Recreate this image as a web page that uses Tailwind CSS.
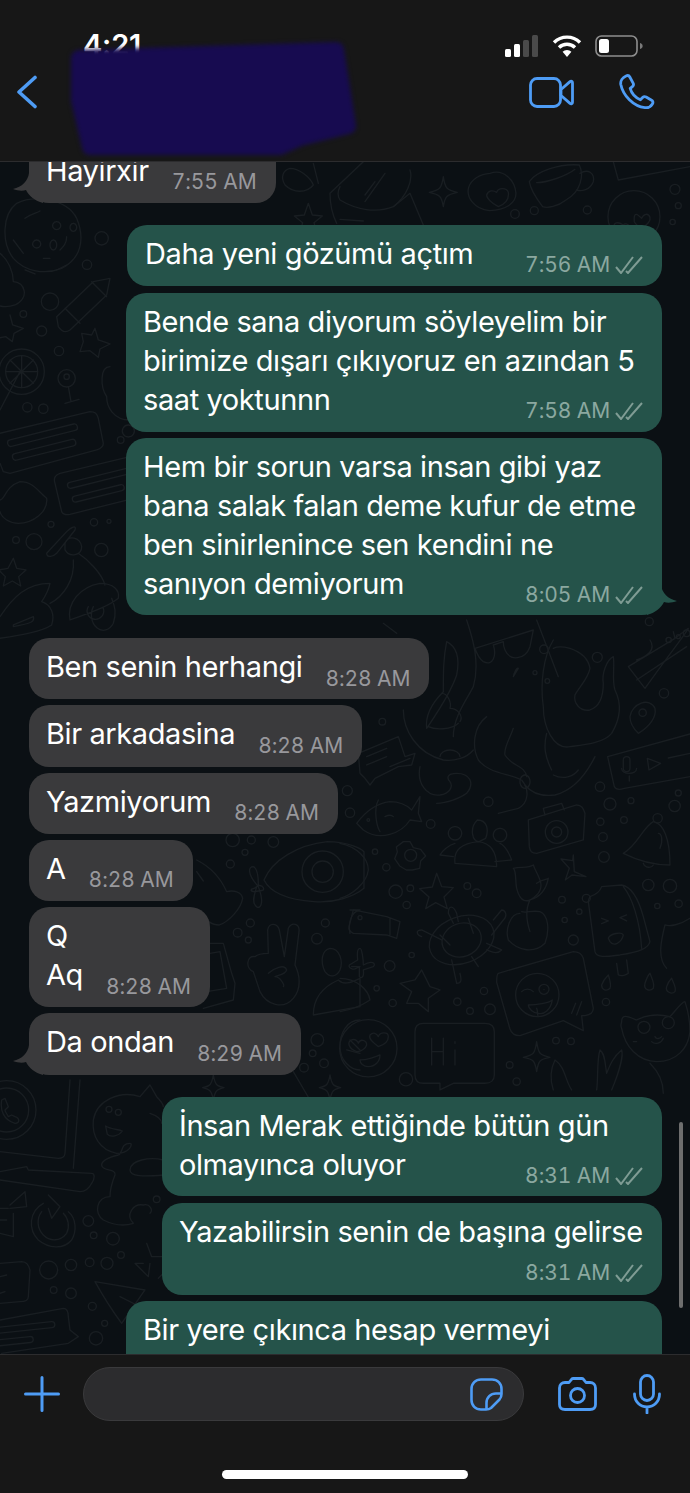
<!DOCTYPE html>
<html lang="en">
<head>
  <meta charset="UTF-8">
  <meta name="viewport" content="width=device-width, initial-scale=1.0">
  <title>Chat</title>
  <script src="https://cdn.jsdelivr.net/npm/@tailwindcss/browser@4"></script>
</head>
<body class="bg-[#0b1014]">
<div class="relative flex flex-col w-[690px] h-[1493px] overflow-hidden font-['Inter',sans-serif] text-white">

  <!-- Header -->
  <header class="relative z-10 h-[162px] shrink-0 bg-[#171717] border-b border-[#2c2c2e]">
    <div class="flex items-start h-[62px] pt-[30px] pl-[83px] pr-[47px] justify-between">
      <span class="text-[29px] leading-[30px] font-semibold tracking-[-0.2px]">4:21</span>
      <div class="flex items-center gap-[13px] pt-[5px]">
        <!-- signal -->
        <svg width="34" height="22" viewBox="0 0 34 22">
          <rect x="0" y="14" width="6" height="8" rx="1.5" fill="#fff"/>
          <rect x="9" y="9" width="6" height="13" rx="1.5" fill="#fff"/>
          <rect x="18" y="5" width="6" height="17" rx="1.5" fill="#4a4a4a"/>
          <rect x="27" y="0" width="6" height="22" rx="1.5" fill="#4a4a4a"/>
        </svg>
        <!-- wifi -->
        <svg width="30" height="22" viewBox="0 0 30 22" fill="none" stroke="#fff" stroke-width="3.4">
          <path d="M2 7.5a18.5 18.5 0 0 1 26 0"/>
          <path d="M7 12.5a11.5 11.5 0 0 1 16 0"/>
          <path d="M15 22l-4.4-5.2a6 6 0 0 1 8.8 0z" fill="#fff" stroke="none"/>
        </svg>
        <!-- battery -->
        <svg width="48" height="22" viewBox="0 0 48 22" fill="none">
          <rect x="1" y="1" width="41" height="20" rx="5.5" stroke="#8e8e8e" stroke-width="1.6"/>
          <rect x="4" y="4" width="10" height="14" rx="2.5" fill="#fff"/>
          <path d="M45 8c2 .6 2.6 1.6 2.6 3s-.6 2.4-2.6 3z" fill="#7a7a7a"/>
        </svg>
      </div>
    </div>
    <div class="flex items-center justify-between h-[60px] pl-[16px] pr-[35px]">
      <svg width="22" height="34" viewBox="0 0 22 34" fill="none" stroke="#4e9cf5" stroke-width="3.6" stroke-linecap="round" stroke-linejoin="round">
        <path d="M19 2.5L3 17l16 14.5"/>
      </svg>
      <div class="flex items-center gap-[45px]">
        <svg width="45" height="31" viewBox="0 0 45 31" fill="none" stroke="#4e9cf5" stroke-width="2.8" stroke-linejoin="round">
          <rect x="1.5" y="1.5" width="30" height="28" rx="6.5"/>
          <path d="M32 12.5L41 4.600c1.100-.9 2.500-.3 2.500 1.200v19.400c0 1.500-1.400 2.100-2.500 1.200L32 18.500z"/>
        </svg>
        <svg width="36" height="36" viewBox="0 0 36 36" fill="none" stroke="#4e9cf5" stroke-width="2.8" stroke-linejoin="round">
          <path d="M7 2c1.500-.8 3-.5 3.800 1l3.300 6.200c.7 1.300.4 2.500-.7 3.400l-2.200 1.800c1.400 5.300 4.800 9 10.200 11.400l2.200-2.300c1-1 2.200-1.200 3.500-.5l5.500 3.200c1.400.8 1.700 2.400.8 3.700-1.700 2.700-4.500 4.200-7.500 3.700C14.500 32.600 4 21.500 1.800 10.500 1.200 7 3.500 3.600 7 2z"/>
        </svg>
      </div>
    </div>
  </header>

  <!-- Redacted contact name -->
  <svg class="absolute z-20 left-0 top-0 blur-[2px]" width="400" height="170" viewBox="0 0 400 170">
    <path d="M79 58L336 50L348 126L300 138L280 147L90 147L79 100z" fill="#170b50" stroke="#170b50" stroke-width="16" stroke-linejoin="round"/>
  </svg>

  <!-- Messages -->
  <main class="relative flex-1 overflow-hidden bg-[#0b1014]">
    <!-- Wallpaper doodles, drawn in 3x crop coordinates -->
    <svg class="absolute inset-0" width="690" height="1192" viewBox="0 162 690 1192" fill="none" stroke="#191e22" stroke-width="4" stroke-linecap="round" stroke-linejoin="round">
      <g transform="translate(250 160) scale(.3333)">
        <path d="M120 25c25 0 60 25 70 50-20 25-60 25-85 0-15-25-5-45 15-50zM190 10l15 60"/>
        <path d="M340 5L240 100c0 40 10 70 20 90M480 30c10 30-10 80-50 110-50 20-110 10-160-20-10-15-5-30 0-40M345 105l30-40M345 125l60-85"/>
        <path d="M430 140l50-40 40 95M270 178l70 5"/>
        <path d="M175 130l12 35 30 3-25 20 8 30-25-18-25 18 8-30-25-20 30-3z"/>
        <path d="M580 50c5 35 10 40 42 47-32 7-37 12-42 43-5-31-10-36-42-43 32-7 37-12 42-47z"/>
        <path d="M720 40c40-15 75 20 78 60 0 30-30 50-80 52-45-5-70-40-62-70 8-25 35-40 64-42z"/>
        <path d="M745 140c-20-10-35-25-35-35 5-15 20-15 30-8 5-15 30-15 35 0 3 20-10 35-30 43z"/>
        <path d="M838 65c20-30 90-55 150-50 15 30 5 80-40 105-25 20-55 25-70 20-15-20-35-45-40-75z"/>
        <path d="M860 68c30 0 90-20 115-40M990 40c25-15 45 0 40 25-10 25-35 30-50 25"/>
        <circle cx="795" cy="162" r="13"/><circle cx="853" cy="152" r="12"/><circle cx="1012" cy="150" r="12"/>
        <circle cx="1152" cy="170" r="78"/><circle cx="1275" cy="88" r="15"/><circle cx="1285" cy="137" r="9"/><circle cx="1268" cy="186" r="8"/>
        <path d="M1120 195c-15-10-30-10-28 8 2 12 15 22 28 25 10-10 20-20 18-28-3-10-15-10-18-5zM1175 175c-10-10-25-25-22 10 2 6 10 12 20 22 15-10 30-25 27-35-5-15-20-10-25 3z"/>
        <path d="M1090 5l15 55 215-40"/>
      </g>

      <g transform="translate(0 190) scale(.3333)">
        <path d="M50 40c50-25 150-15 180 45 25 60 15 120-45 150-50 20-110 10-145-30-35-45-35-130 10-165z"/>
        <path d="M75 85c20-15 35-15 45-22M110 150a12 12 0 1 0 .1 0M170 95a12 12 0 1 0 .1 0M220 100a10 12 0 1 0 .1 0M160 150a10 15 0 1 0 .1 0M130 205h20M40 150l30 40M200 140c0 20-10 30-20 40M75 240l30 12M170 240l30-15"/>
        <path d="M0 190c25 20 40 55 40 85 35 0 50 50 5 70-15 5-35 5-45 3"/>
        <path d="M170 380l110-105 50-10-10 50-110 105c-15 10-25 5-35-10zM275 275l45 45M195 355l45 45"/>
        <circle cx="150" cy="335" r="26"/><circle cx="125" cy="423" r="15"/><circle cx="70" cy="372" r="10"/><circle cx="177" cy="483" r="14"/><circle cx="305" cy="145" r="20"/><circle cx="261" cy="224" r="14"/>
        <path d="M285 415l10 35 35 12-30 15-5 25-25-20-30 3 10-30-5-25 30 5z"/>
        <path d="M30 375l8 30 32 10-28 15-5 25-20-15-25 5"/>
        <circle cx="65" cy="545" r="68"/><circle cx="65" cy="545" r="48"/><path d="M65 497v96M17 545h96M30 510l70 70M100 510l-70 70M0 660l60-115"/>
        <circle cx="200" cy="565" r="26"/><circle cx="200" cy="560" r="8"/><path d="M205 590l8 45M195 640l42-12"/>
        <circle cx="82" cy="652" r="14"/><circle cx="130" cy="656" r="14"/>
        <path d="M0 730l270-65c15 0 20 5 25 20l15 75c0 10-5 15-20 20l-260 70-20-5-10-25h-20"/>
        <rect x="20" y="725" width="215" height="20" rx="9" transform="rotate(-14 130 735)"/>
        <rect x="35" y="770" width="195" height="20" rx="9" transform="rotate(-14 130 780)"/>
        <path d="M390 800l-210 50c-15 5-20 15-15 30l20 85c5 10 15 10 25 8l180-45"/>
        <rect x="200" y="855" width="190" height="18" rx="9" transform="rotate(-14 300 865)"/>
        <rect x="215" y="900" width="160" height="18" rx="9" transform="rotate(-14 300 910)"/>
        <path d="M385 705a18 18 0 1 0 .1 0M330 530c-30 0-30 60-10 90 0 30 20 70 70 70"/>
        <circle cx="362" cy="750" r="10"/><circle cx="282" cy="997" r="11"/><circle cx="327" cy="994" r="6"/><circle cx="153" cy="1003" r="9"/><circle cx="48" cy="1050" r="10"/><circle cx="102" cy="1055" r="24"/><circle cx="304" cy="1080" r="20"/>
        <path d="M0 930c15 0 15-40 60-55 40 0 55 30 80 50 5 40-40 75-85 75-25 0-50-15-55-35"/>
        <path d="M140 1090l60-65c15-15 30-20 25-5l-55 70c-10 10-30 15-30 0zM195 1060c10-25 45-20 50 10 0 25-35 35-50 10zM235 1090c30 20 70 60 80 95M220 1110c5 60-30 110-70 130"/>
        <path d="M40 1105l10 30 28 5-22 20 6 28-25-15-27 15 6-28-20-20 28-5z"/>
        <path d="M0 1280c40-60 80-100 150-100-5 25-15 40-25 55 30 10 40 40 30 70-30 20-90 30-155 40M40 1305l60-25c5 15-5 20-60 30z"/>
        <path d="M210 1290c-10-50 30-100 90-110 40 0 60 20 55 45-25 20-60 35-145 65zM280 1250a35 45 0 1 0 60 50c10-30 5-50-5-75M265 1250a25 25 0 1 0 45 5"/>
      </g>

      <g transform="translate(190 830) scale(.3333)">
        <circle cx="128" cy="30" r="20"/><circle cx="184" cy="30" r="12"/><circle cx="250" cy="36" r="16"/><circle cx="165" cy="67" r="9"/><circle cx="121" cy="102" r="12"/>
        <path d="M20 90c40 20 70 50 90 95 20-5 45 0 48 20-5 30-40 70-70 80-25 0-40-15-45-30M20 125l20 28"/>
        <path d="M222 150c25-60 100-105 190-115 60 0 100 20 110 30v110c-30 25-90 45-150 40-70-5-130-25-150-65z"/>
        <circle cx="398" cy="125" r="62"/><circle cx="398" cy="125" r="32"/>
        <path d="M205 170c-35-40-30-60-15-60 12 5 15 30 15 55-10 15-25 10-20 15-5 0 0 5 10 5 15-5 30 0 25-12-5-8-15-8-20-3-5 20-15 40-5 55 10 15 20 5 20-15 0-15-5-25-10-40z"/>
        <circle cx="181" cy="279" r="12"/><circle cx="143" cy="308" r="13"/><circle cx="175" cy="330" r="9"/><circle cx="406" cy="279" r="12"/><circle cx="381" cy="326" r="16"/>
        <path d="M235 370l-2-70c5-25 30-20 35 0l15 80 12-85c10-20 35-15 32 10l-12 100c15 30 20 70-5 100-30 35-80 20-100-20l-20-60c-25-10-20-50 5-45 10-10 30-10 40-10"/>
        <path d="M235 430c15-15 50-30 55-10-5 15-25 15-35 20 15 0 30 25 25 30"/>
        <path d="M420 355c30 0 40 40 30 65-10 20-30 25-45 5-15-30-10-65 15-70z"/>
        <path d="M370 555c0-50 30-85 75-105 15 15 35 10 65-5v85z"/>
        <path d="M480 240h30M480 310c-5-25 0-65 30-70M485 410h25"/>
        <circle cx="382" cy="630" r="19"/><circle cx="368" cy="670" r="10"/><circle cx="342" cy="713" r="13"/><circle cx="402" cy="700" r="13"/>
        <path d="M510 570c-40 0-60 40-60 80 0 40 30 70 60 70M470 660l40 10M480 630l30 30"/>
        <path d="M420 735c5 30 10 33 32 38-22 5-27 10-32 37-5-27-10-32-32-37 22-5 27-8 32-38zM70 735c5 30 10 33 32 38-22 5-27 10-32 37-5-27-10-32-32-37 22-5 27-8 32-38z"/>
        <path d="M60 340l40 0 25 90 10 30-5 50-90 25M60 370l30-5 20 110-60 10"/>
        <path d="M310 725l50 85"/>
      </g>

      <g transform="translate(340 620) scale(.3333)">
        <path d="M405 85l175-55-10 50c-15 40-60 45-75 10-5-10-5-20-5-25l-30 10c10 30 0 65-30 50-15-10-20-25-25-40zM590 0l65 170M520 170l15-25c-5-5-15 20-15 25zM130 10l40 30M380 0c20 60 40 130 20 200-20 40-60 90-60 150"/>
        <circle cx="612" cy="88" r="13"/><circle cx="622" cy="183" r="7"/><circle cx="585" cy="158" r="6"/><circle cx="127" cy="305" r="10"/><circle cx="772" cy="112" r="15"/><circle cx="928" cy="5" r="12"/><circle cx="972" cy="220" r="14"/>
        <path d="M320 65c30 15 40 50 30 100-20 60-70 130-90 160-5-40 20-80 50-110 0-60 0-100 10-150zM190 270c0 60 40 130 120 150 30 5 70-5 90-30"/>
        <path d="M305 220c20 0 30 30 25 45 25 0 40 25 30 40M265 320c20 10 70 10 90-10"/>
        <path d="M300 410a30 20 0 0 1 60 0M240 440c-10 50 20 90 60 85 30-5 40-25 30-40-10-10-10-25 20-25 40 0 55 30 30 60-20 15-60 30-90 30"/>
        <path d="M440 290c-40 30-45 90-25 130 30 40 90 40 130 60 25 30 20 70-10 85l-60 15M520 325c-10 30-30 60-25 80 20 35 60 30 65 65M555 465a15 20 0 1 0 .1 0"/>
        <path d="M640 60c-30 50-40 130-30 200 0 60 30 130 80 120 40-5 100-10 125-40 30-50 30-90 10-130-10-30 0-70-5-100-20 10-35 50-30 80 0 40-10 70-40 80-30 5-50-20-45-45 10-20 40-50 45-80-5-30-30-50-60-60-20-5-40-5-50 0"/>
        <path d="M620 340c-10 40-5 70 15 110M640 465c30 15 60 5 75-15M765 410c-25 50-60 100-120 115-40 5-70-5-90-30"/>
        <path d="M870 290c5-40 60-60 75-25 5 25-15 55-50 75-15-15-25-30-25-50z"/><circle cx="908" cy="278" r="11"/>
        <path d="M865 140l140-85 40-30c-10 20-30 40-130 180zM890 180l150-100M930 60c20 30-10 50-40 60M1000 35l5 20"/>
        <circle cx="986" cy="60" r="8"/><circle cx="1015" cy="50" r="6"/><circle cx="1040" cy="40" r="10"/>
        <path d="M803 410l247-68M803 410l20 90c5 10 15 10 30 5l197-35M1050 400l-65 14"/>
        <path d="M922 415l40 15-35 20z"/><rect x="850" y="410" width="20" height="45" rx="10"/><path d="M845 445c0 20 45 20 45 0M868 468v15"/>
        <path d="M60 460l-5-60 120-50 20 60 30-10-10 35-40 5-70 35-15 20-15-20z"/><path d="M80 410l60-25M80 435l60-25"/><path d="M150 440l60-25"/>
        <circle cx="22" cy="512" r="15"/><circle cx="30" cy="578" r="14"/><circle cx="445" cy="545" r="14"/><circle cx="272" cy="612" r="13"/>
        <path d="M50 610c30-40 60-60 100-65 30 0 50 10 65 25l25-40-5 50 10 25-35-5c-25 40-90 65-140 30z"/><path d="M115 540c-15 30-5 80 5 95"/><circle cx="85" cy="600" r="4"/><path d="M135 590c10-5 20-5 25 0"/>
        <path d="M565 600l145-45c15 0 20 10 25 25l-5 80-140 40c-15 0-20-5-22-20zM615 585l-5-20 55-15 8 20"/>
        <circle cx="650" cy="636" r="34"/><circle cx="650" cy="636" r="15"/>
        <circle cx="780" cy="500" r="14"/><circle cx="810" cy="552" r="18"/><circle cx="873" cy="542" r="9"/><circle cx="781" cy="605" r="11"/><circle cx="852" cy="600" r="10"/><circle cx="789" cy="651" r="13"/><circle cx="792" cy="711" r="16"/><circle cx="1015" cy="519" r="9"/><circle cx="1004" cy="558" r="17"/>
        <path d="M850 700c40-20 60-80 90-95 30 5 50 50 50 130-50 0-100-15-140-35z"/><circle cx="953" cy="595" r="14"/><path d="M955 640c10 0 15 20 5 45M910 730c5 15 25 15 30 5"/>
        <path d="M412 600c30 0 35 30 25 55l-20 10c-20 0-30-40-5-65zM345 730c-5-40 20-60 70-65 40 5 55 35 55 75zM345 620a20 20 0 1 0 .1 0M480 625a20 20 0 1 0 .1 0M345 670c-20 5-40 25-45 35l40 5M480 670c15 5 30 35 35 50l-50 5"/>
        <circle cx="105" cy="695" r="8"/><circle cx="139" cy="742" r="11"/>
        <path d="M190 665l20 0 10 18 22 5 15 20-15 15-3 22-22 5-18 0-20-12-15-22 8-20-3-15z"/><circle cx="212" cy="706" r="18"/>
        <path d="M0 670c50 10 85 45 85 80-5 40-50 75-85 85"/>
        <path d="M290 760l15 40 35 3-28 28 10 35-35-18-30 18 10-35-28-25 38-5z"/>
        <circle cx="167" cy="815" r="20"/><circle cx="211" cy="805" r="10"/><circle cx="200" cy="855" r="11"/><circle cx="382" cy="798" r="10"/><circle cx="410" cy="820" r="13"/>
        <path d="M700 705l3 50 35 15-42-5-20 15 12-35-25-28 35 5z"/>
        <path d="M40 870l100 20 40 15-10 50-30-10-100-5c-10-5-15-10-13-20zM150 895l0 50"/><circle cx="60" cy="893" r="6"/>
        <path d="M60 985c-5 0-10 5-7 35l-25 15c-5 10 15 15 20 10l10-5 0 30c5 5 15 5 12-20l30-10c10-10-5-20-30-5 0-20-5-50-10-50z"/>
        <circle cx="149" cy="1038" r="16"/><circle cx="215" cy="1005" r="8"/><circle cx="110" cy="1105" r="8"/><circle cx="158" cy="1149" r="11"/><circle cx="352" cy="1145" r="11"/><circle cx="390" cy="1173" r="10"/><circle cx="450" cy="1168" r="16"/><circle cx="432" cy="1113" r="11"/>
        <path d="M0 1075c50 0 85 35 90 65-30 20-60 30-90 35"/>
        <path d="M245 1050l25 50 30 10-35 25 0 40-30-25-35 0 15-35-35-25 45-10z"/>
        <ellipse cx="365" cy="960" rx="60" ry="50" transform="rotate(-20 365 960)"/><ellipse cx="365" cy="960" rx="100" ry="70" transform="rotate(-20 365 960)"/>
        <path d="M340 910l-15-30c0-25 15-25 25 0l5 25M460 900l25-30c10 0 20 15 5 30l-35 45M305 960l-60-30c-20 0-15 15 0 20M335 1020l15 70c15 0 15-10 10-30M440 970l45 20c-15 15-30 5-45 0M385 895l15 45M300 945l30 30M395 1010l20 30"/>
        <path d="M580 735c10 30 40 60 10 90-30 30-50 20-60-20-5-25 0-50-10-60 25-5 45 0 60-10zM590 790c20-15 30-10 35-15-5 25-20 55-55 65-15 30-10 65 0 95M540 880c-30 0-45 50-35 80 30 35 80 40 110 10 15-40 10-85-15-95-25-5-40 5-55 0"/>
        <circle cx="666" cy="839" r="10"/><circle cx="739" cy="835" r="12"/><circle cx="718" cy="875" r="8"/><circle cx="674" cy="900" r="8"/><circle cx="700" cy="960" r="15"/>
        <path d="M750 830c15-5 30-15 35-30l60-5c30 5 50 40 65 95l20 75c-5 20-30 30-90 40-40 5-70 10-75-10l-20-150c0-5 5-15 5-15zM850 800c25 30 50 100 55 185"/>
        <path d="M785 895l20 8-20 8M860 885l-20 8 20 10M805 955c5-15 40-20 45-10-5 25-30 35-40 20zM830 1030l5 35c10 5 25 0 30-5l-5-40"/>
        <path d="M785 1095c5-15 15-25 20-30 5 15 10 30 5 40-10 10-25 5-25-10zM915 1090c5-15 10-25 15-30 5 15 15 30 10 45-10 10-30 5-25-15zM980 1100c5-15 10-20 15-25 5 15 15 25 10 40-10 10-30 0-25-15z"/>
        <circle cx="798" cy="1146" r="11"/><circle cx="925" cy="795" r="17"/><circle cx="990" cy="798" r="20"/><circle cx="952" cy="858" r="8"/><circle cx="1016" cy="851" r="11"/>
        <path d="M975 915c-10 40-25 100 5 130M975 915c15 5 45 0 75-20"/>
        <path d="M475 1060l225-65c15 0 25 5 30 20l30 150c0 15-10 20-25 22l-10 0 5 45-60-30-130 45c-15 0-25-5-30-20l-40-140c0-10 0-25 5-27z"/>
        <circle cx="592" cy="1125" r="65"/><circle cx="612" cy="1108" r="15"/><path d="M612 1108v1M545 1115c10-10 25-10 35 0M565 1155c25 0 60-5 72-15-5 30-25 45-42 40-15 0-30-15-30-25zM590 1165c5 10 0 20 5 25M695 1180l12-30M710 1185l15-40"/>
        <circle cx="85" cy="1285" r="86"/>
        <path d="M50 1295c-25-10-30-30-15-35 10-5 20 5 20 10 5-15 25-10 25 5-3 10-15 20-30 20zM115 1280c-20-15-30-25-25-35 10-10 20-5 25 5 5-15 30-15 30 0 0 15-15 25-30 30zM60 1320c20 0 50-10 60-15 0 20-15 35-35 35-15 0-25-10-25-20z"/>
        <path d="M250 1210h185c20 0 28 10 28 25v130c0 15-10 25-28 25h-95l-40 20 0-20h-50c-18 0-25-10-25-25v-130c0-15 8-25 25-25z"/>
        <path d="M275 1255v80M310 1255v80M275 1295h35M345 1290v45M345 1265v5"/>
        <circle cx="198" cy="1378" r="20"/><circle cx="509" cy="1335" r="10"/><circle cx="530" cy="1385" r="11"/><circle cx="648" cy="1262" r="10"/><circle cx="693" cy="1264" r="10"/>
        <path d="M590 1265c5 35 8 40 40 47-32 5-35 12-40 43-5-31-8-38-40-43 32-7 35-12 40-47z"/>
        <path d="M845 1205c0-25 20-15 45-5 30-15 60-20 100-10 15-15 35-45 45-45 10 30 15 50 15 90-5 50-40 90-100 90-55 0-95-45-105-100-5-10 0-15 0-20z"/>
        <circle cx="912" cy="1222" r="18"/><circle cx="985" cy="1208" r="18"/><path d="M945 1250c5 10 15 5 20 0M935 1265c10 10 30 5 35-10M880 1265h10"/>
        <path d="M640 1410c-10-30-10-60 5-90 30 20 30 60 50 90M770 1410c5-30 0-90 10-120 15 10 15 40 20 70 10-25 20-50 45-70 5 15-5 60-30 120M930 1330c30 30 40 60 40 90"/>
      </g>

      <g transform="translate(0 1080) scale(.3333)">
        <circle cx="20" cy="90" r="88"/><circle cx="20" cy="90" r="66"/>
        <path d="M5 60c-5 30 5 60 40 70 15 0 15-15 0-20l-10-5-10 5c-5-10-10-15-10-20l10-10-10-25z"/>
        <path d="M210 0l-15 220c0 10-10 15-20 15L0 215M240 0l-20 265M0 275l80-15 5 10 190 10c10 0 10 15 0 30-10 20-20 25-35 25L0 300"/>
        <path d="M420 50c-60-20-130 10-140 70-5 50 20 90 70 100 40 0 50-30 40-30-30 0-20 30-35 35-20 5-50 15-50 30 0 20 45 10 40 30-10 25-15 50-15 65-40 0-50 50-20 70 30 15 60 20 90 10-25-25 0-60 30-55 20-5 30 15 20 25"/>
        <path d="M420 50l30-35 20 35c10 10 20 25 20 30M450 100c15 5 35 15 35 30M490 240c-40-10-100 0-100 30 0 20 40 20 100 15"/>
        <circle cx="327" cy="88" r="9"/><circle cx="355" cy="97" r="9"/><path d="M317 138c15 10 40 10 50 15-10 15-35 20-45 10z"/>
        <circle cx="470" cy="358" r="10"/>
        <path d="M30 375l45-40 5 45-50 5M25 385H0M40 400v70l-40-10M20 420H0"/>
        <path d="M145 345l35 35-25 35-10-30M205 395c25 20 25 60 10 85-25 30-70 25-100 0-30-30-30-85 15-110M190 400c15 15 20 40 10 60-20 25-50 25-70 5-20-20-20-50-5-70"/>
        <circle cx="265" cy="423" r="16"/><circle cx="281" cy="466" r="10"/><circle cx="339" cy="476" r="19"/><circle cx="363" cy="525" r="10"/>
        <path d="M440 490l15 40 40 0M430 550l-25 0 40 40 5-40M475 595l20-20"/>
        <circle cx="146" cy="570" r="27"/><circle cx="213" cy="555" r="17"/><circle cx="269" cy="547" r="13"/><circle cx="321" cy="550" r="18"/><circle cx="161" cy="630" r="10"/><circle cx="213" cy="640" r="16"/><circle cx="277" cy="679" r="12"/><circle cx="314" cy="730" r="9"/><circle cx="288" cy="775" r="20"/>
        <path d="M0 550l65-5c15 0 20 10 25 25l-5 80c0 10-10 15-25 15L0 670M0 590l20-5M0 640l15-5"/>
        <path d="M285 605l150 25-70 100c-30-40-55-80-80-125zM360 650l50 25"/>
        <path d="M0 720l190-35c10 0 15 10 15 25l5 40 25 20-30 20-200 30"/>
        <rect x="-40" y="735" width="205" height="18" rx="9" transform="rotate(-6 60 745)"/><rect x="-20" y="775" width="120" height="18" rx="9" transform="rotate(-6 40 785)"/>
      </g>
    </svg>

    <!-- Scroll indicator -->
    <div class="absolute z-10 right-[7px] top-[960px] w-[4px] h-[186px] rounded-full bg-[#6e6e6e]"></div>

    <div class="relative flex flex-col -mt-[20px]">
      <!-- incoming, clipped by header -->
      <div class="flex pl-[29px]">
        <div class="relative flex items-end gap-[23px] h-[61px] pl-[17px] pr-[19px] pt-[9px] pb-[9px] rounded-[20px] bg-[#3a3a3c]">
          <span class="text-[29px] leading-[39px] self-start tracking-[-0.4px]">Hayirxir</span>
          <span class="text-[21px] leading-[24px] tracking-[-0.1px] tabular-nums text-[#98989c]">7:55 AM</span>
          <svg class="absolute -left-[16px] bottom-0" width="32" height="30" viewBox="0 0 32 30" fill="#3a3a3c"><path d="M16 0C15 8 9 14 0 16c5 2 10 2 13 1 3 6 9 11 17 13V0z"/></svg>
        </div>
      </div>

      <!-- outgoing -->
      <div class="flex justify-end pr-[28px] mt-[22px]">
        <div class="flex items-end justify-between w-[535px] h-[61px] pl-[18px] pr-[19px] pt-[9px] pb-[9px] rounded-[20px] bg-[#25534a]">
          <span class="text-[29px] leading-[39px] self-start tracking-[-0.4px]">Daha yeni gözümü açtım</span>
          <span class="flex items-center gap-[5px] text-[21px] leading-[24px] tracking-[-0.1px] tabular-nums text-[#8ba8a0]">7:56 AM<svg width="28" height="18" viewBox="0 0 28 18" fill="none" stroke="#7f9c94" stroke-width="2"><path d="M1 11l5 6L18 1M11 15l2 2L27 1"/></svg></span>
        </div>
      </div>

      <div class="flex justify-end pr-[28px] mt-[7px]">
        <div class="flex flex-col w-[536px] pl-[17px] pr-[19px] pt-[9px] pb-[9px] rounded-[20px] bg-[#25534a]">
          <p class="text-[29px] leading-[39px] tracking-[-0.4px] whitespace-nowrap">Bende sana diyorum söyleyelim bir<br>birimize dışarı çıkıyoruz en azından 5<br>saat yoktunnn</p>
          <span class="flex items-center justify-end gap-[5px] -mt-[20px] h-[24px] text-[21px] leading-[24px] tracking-[-0.1px] tabular-nums text-[#8ba8a0]">7:58 AM<svg width="28" height="18" viewBox="0 0 28 18" fill="none" stroke="#7f9c94" stroke-width="2"><path d="M1 11l5 6L18 1M11 15l2 2L27 1"/></svg></span>
        </div>
      </div>

      <div class="flex justify-end pr-[28px] mt-[6px]">
        <div class="relative flex flex-col w-[536px] pl-[17px] pr-[19px] pt-[9px] pb-[8px] rounded-[20px] bg-[#25534a]">
          <p class="text-[29px] leading-[39px] tracking-[-0.4px] whitespace-nowrap">Hem bir sorun varsa insan gibi yaz<br>bana salak falan deme kufur de etme<br>ben sinirlenince sen kendini ne<br>sanıyon demiyorum</p>
          <span class="flex items-center justify-end gap-[5px] -mt-[20px] h-[24px] text-[21px] leading-[24px] tracking-[-0.1px] tabular-nums text-[#8ba8a0]">8:05 AM<svg width="28" height="18" viewBox="0 0 28 18" fill="none" stroke="#7f9c94" stroke-width="2"><path d="M1 11l5 6L18 1M11 15l2 2L27 1"/></svg></span>
          <svg class="absolute -right-[15px] bottom-0 -scale-x-100" width="32" height="30" viewBox="0 0 32 30" fill="#25534a"><path d="M16 0C15 8 9 14 0 16c5 2 10 2 13 1 3 6 9 11 17 13V0z"/></svg>
        </div>
      </div>

      <!-- incoming run -->
      <div class="flex pl-[29px] mt-[23px]">
        <div class="flex items-end gap-[23px] h-[61px] pl-[17px] pr-[19px] pt-[9px] pb-[8px] rounded-[20px] bg-[#3a3a3c]">
          <span class="text-[29px] leading-[39px] self-start tracking-[-0.4px]">Ben senin herhangi</span>
          <span class="text-[21px] leading-[24px] tracking-[-0.1px] tabular-nums text-[#98989c]">8:28 AM</span>
        </div>
      </div>
      <div class="flex pl-[29px] mt-[6px]">
        <div class="flex items-end gap-[23px] h-[62px] pl-[17px] pr-[19px] pt-[9px] pb-[9px] rounded-[20px] bg-[#3a3a3c]">
          <span class="text-[29px] leading-[39px] self-start tracking-[-0.4px]">Bir arkadasina</span>
          <span class="text-[21px] leading-[24px] tracking-[-0.1px] tabular-nums text-[#98989c]">8:28 AM</span>
        </div>
      </div>
      <div class="flex pl-[29px] mt-[6px]">
        <div class="flex items-end gap-[23px] h-[61px] pl-[17px] pr-[19px] pt-[9px] pb-[9px] rounded-[20px] bg-[#3a3a3c]">
          <span class="text-[29px] leading-[39px] self-start tracking-[-0.4px]">Yazmiyorum</span>
          <span class="text-[21px] leading-[24px] tracking-[-0.1px] tabular-nums text-[#98989c]">8:28 AM</span>
        </div>
      </div>
      <div class="flex pl-[29px] mt-[6px]">
        <div class="flex items-end gap-[23px] h-[61px] pl-[17px] pr-[19px] pt-[9px] pb-[9px] rounded-[20px] bg-[#3a3a3c]">
          <span class="text-[29px] leading-[39px] self-start tracking-[-0.4px]">A</span>
          <span class="text-[21px] leading-[24px] tracking-[-0.1px] tabular-nums text-[#98989c]">8:28 AM</span>
        </div>
      </div>
      <div class="flex pl-[29px] mt-[6px]">
        <div class="flex items-end gap-[23px] h-[100px] pl-[17px] pr-[19px] pt-[9px] pb-[8px] rounded-[20px] bg-[#3a3a3c]">
          <span class="text-[29px] leading-[39px] self-start tracking-[-0.4px]">Q<br>Aq</span>
          <span class="text-[21px] leading-[24px] tracking-[-0.1px] tabular-nums text-[#98989c]">8:28 AM</span>
        </div>
      </div>
      <div class="flex pl-[29px] mt-[6px]">
        <div class="relative flex items-end gap-[23px] h-[62px] pl-[17px] pr-[19px] pt-[9px] pb-[9px] rounded-[20px] bg-[#3a3a3c]">
          <span class="text-[29px] leading-[39px] self-start tracking-[-0.4px]">Da ondan</span>
          <span class="text-[21px] leading-[24px] tracking-[-0.1px] tabular-nums text-[#98989c]">8:29 AM</span>
          <svg class="absolute -left-[16px] bottom-0" width="32" height="30" viewBox="0 0 32 30" fill="#3a3a3c"><path d="M16 0C15 8 9 14 0 16c5 2 10 2 13 1 3 6 9 11 17 13V0z"/></svg>
        </div>
      </div>

      <!-- outgoing run -->
      <div class="flex justify-end pr-[28px] mt-[22px]">
        <div class="flex flex-col w-[500px] pl-[17px] pr-[19px] pt-[9px] pb-[8px] rounded-[20px] bg-[#25534a]">
          <p class="text-[29px] leading-[39px] tracking-[-0.4px] whitespace-nowrap">İnsan Merak ettiğinde bütün gün<br>olmayınca oluyor</p>
          <span class="flex items-center justify-end gap-[5px] -mt-[20px] h-[24px] text-[21px] leading-[24px] tracking-[-0.1px] tabular-nums text-[#8ba8a0]">8:31 AM<svg width="28" height="18" viewBox="0 0 28 18" fill="none" stroke="#7f9c94" stroke-width="2"><path d="M1 11l5 6L18 1M11 15l2 2L27 1"/></svg></span>
        </div>
      </div>
      <div class="flex justify-end pr-[28px] mt-[7px]">
        <div class="flex flex-col w-[500px] h-[92px] pl-[17px] pr-[19px] pt-[9px] rounded-[20px] bg-[#25534a]">
          <p class="text-[29px] leading-[39px] tracking-[-0.4px] whitespace-nowrap">Yazabilirsin senin de başına gelirse</p>
          <span class="flex items-center justify-end gap-[5px] mt-[10px] h-[24px] text-[21px] leading-[24px] tracking-[-0.1px] tabular-nums text-[#8ba8a0]">8:31 AM<svg width="28" height="18" viewBox="0 0 28 18" fill="none" stroke="#7f9c94" stroke-width="2"><path d="M1 11l5 6L18 1M11 15l2 2L27 1"/></svg></span>
        </div>
      </div>
      <div class="flex justify-end pr-[28px] mt-[6px]">
        <div class="w-[536px] h-[90px] pl-[17px] pr-[19px] pt-[9px] rounded-[20px] bg-[#25534a]">
          <p class="text-[29px] leading-[39px] tracking-[-0.4px]">Bir yere çıkınca hesap vermeyi</p>
        </div>
      </div>
    </div>
  </main>

  <!-- Composer -->
  <footer class="relative z-10 h-[139px] shrink-0 bg-[#171717] border-t border-[#2c2c2e]">
    <div class="flex items-center h-[54px] mt-[12px] pl-[24px]">
      <svg width="36" height="36" viewBox="0 0 36 36" stroke="#4e9cf5" stroke-width="3" stroke-linecap="round"><path d="M18 1.500v33M1.500 18h33"/></svg>
      <div class="flex items-center justify-end w-[441px] h-[54px] ml-[23px] pr-[20px] rounded-[27px] bg-[#2c2c2e] border border-[#3a3a3c]">
        <svg width="33" height="33" viewBox="0 0 33 33" fill="none" stroke="#4e9cf5" stroke-width="2.6" stroke-linejoin="round">
          <path d="M11 1.500h11c5.500 0 9.500 4 9.500 9.500v5c0 2-.7 4-2 5.500L21 30c-1.500 1.200-3 1.500-5 1.500h-5c-5.500 0-9.500-4-9.500-9.500V11c0-5.500 4-9.500 9.500-9.500z"/>
          <path d="M31 15.500h-5c-5.500 0-9.500 4-9.500 9.500v6"/>
        </svg>
      </div>
      <svg class="ml-[34px]" width="39" height="34" viewBox="0 0 39 34" fill="none" stroke="#4e9cf5" stroke-width="2.800" stroke-linejoin="round">
        <path d="M7 5.500h4l2.500-3.200c.5-.6 1-.8 1.800-.8h8.400c.8 0 1.300.2 1.800.8L28 5.500h4c3.200 0 5.500 2.300 5.500 5.500v16.500c0 3.200-2.300 5-5.500 5H7c-3.200 0-5.500-1.800-5.500-5V11c0-3.200 2.300-5.500 5.500-5.500z"/>
        <circle cx="19.500" cy="18.500" r="7"/>
      </svg>
      <svg class="ml-[36px]" width="28" height="40" viewBox="0 0 28 40" fill="none" stroke="#4e9cf5" stroke-width="2.800" stroke-linecap="round">
        <rect x="7.500" y="1.500" width="13" height="25" rx="6.500"/>
        <path d="M1.500 20c0 7.500 5.500 13 12.500 13s12.500-5.500 12.500-13M14 33v6"/>
      </svg>
    </div>
    <div class="flex justify-center mt-[49px]">
      <div class="w-[246px] h-[9px] rounded-full bg-white"></div>
    </div>
  </footer>
</div>
</body>
</html>
